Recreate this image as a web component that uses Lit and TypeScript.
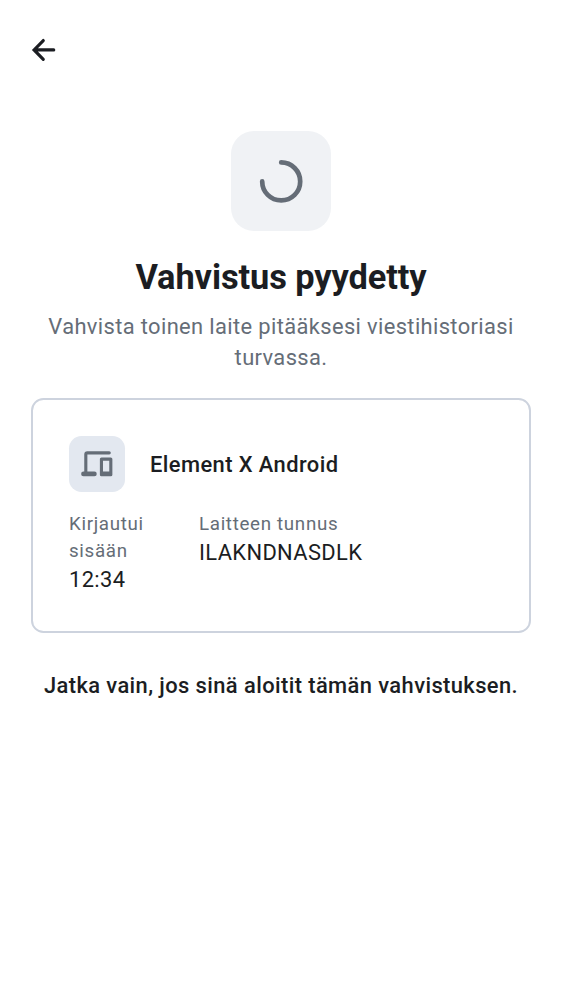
import { LitElement, html, css } from "lit";
import { customElement } from "lit/decorators.js";

@customElement("app-root")
class AppRoot extends LitElement {
  static styles = css`
    :host { display: flex; flex-direction: column; box-sizing: border-box; height: 1000px; background: #fff; color: #1b1d22; font-family: Roboto, sans-serif; }
    * { box-sizing: border-box; }
    svg { display: block; }
    .bar { height: 100px; padding: 31px 0 0 25px; }
    .bar svg { width: 37.5px; height: 37.5px; }
    .head { display: flex; flex-direction: column; align-items: center; padding-top: 31px; }
    .tile { width: 100px; height: 100px; border-radius: 23px; background: #f0f2f5; display: grid; place-items: center; }
    h1 { margin: 25px 0 0; font-size: 34.4px; line-height: 43px; font-weight: 700; letter-spacing: -.1px; white-space: nowrap; }
    .sub { margin: 12px 0 0; font-size: 21.9px; line-height: 31.25px; letter-spacing: .37px; color: #656d77; text-align: center; }
    .card { margin: 24.5px 31px 0; height: 235px; border: 2px solid #cdd3de; border-radius: 12.5px; padding: 36px; }
    .device { display: flex; align-items: center; gap: 25px; }
    .icon { width: 56px; height: 56px; border-radius: 12.5px; background: #e3e8f0; display: grid; place-items: center; }
    .name { font-size: 21.9px; font-weight: 500; letter-spacing: .42px; }
    .info { display: grid; grid-template-columns: 105px 1fr; gap: 25px; margin-top: 19px; }
    .label { font-size: 18.75px; line-height: 27px; letter-spacing: .67px; color: #656d77; }
    .value { font-size: 21.9px; line-height: 29px; letter-spacing: .36px; }
    .note { margin: 37px 0 0; text-align: center; font-size: 21.9px; line-height: 31px; font-weight: 500; letter-spacing: .41px; white-space: nowrap; }
  `;
  render() {
    return html`
      <div class="bar"><svg viewBox="0 0 24 24" fill="none" stroke="#1b1d22" stroke-width="2" stroke-linecap="round" stroke-linejoin="miter"><path d="M11.700 6.100 5.800 12.100l5.900 6M6.100 12.100H18.400"/></svg></div>
      <div class="head">
        <div class="tile"><svg width="50" height="50" viewBox="0 0 50 50" fill="none" stroke="#656d77" stroke-width="4.7" stroke-linecap="round"><path d="M25.200 6.400A19 19 0 1 1 6.200 25.400"/></svg></div>
        <h1>Vahvistus pyydetty</h1>
        <p class="sub">Vahvista toinen laite pitääksesi viestihistoriasi<br>turvassa.</p>
      </div>
      <section class="card">
        <div class="device">
          <div class="icon"><svg width="37.5" height="37.5" viewBox="0 0 24 24" fill="#656d77"><path d="M3.500 20a1.500 1.500 0 0 1 0-3H4V6a2 2 0 0 1 2-2h14a1 1 0 1 1 0 2H6v11h4.500a1.500 1.500 0 0 1 0 3zM15 20a1 1 0 0 1-1-1V9a1 1 0 0 1 1-1h6a1 1 0 0 1 1 1v10a1 1 0 0 1-1 1zm1-3h4v-7h-4z"/></svg></div>
          <div class="name">Element X Android</div>
        </div>
        <div class="info">
          <div><div class="label">Kirjautui sisään</div><div class="value">12:34</div></div>
          <div><div class="label">Laitteen tunnus</div><div class="value">ILAKNDNASDLK</div></div>
        </div>
      </section>
      <p class="note">Jatka vain, jos sinä aloitit tämän vahvistuksen.</p>
    `;
  }
}
